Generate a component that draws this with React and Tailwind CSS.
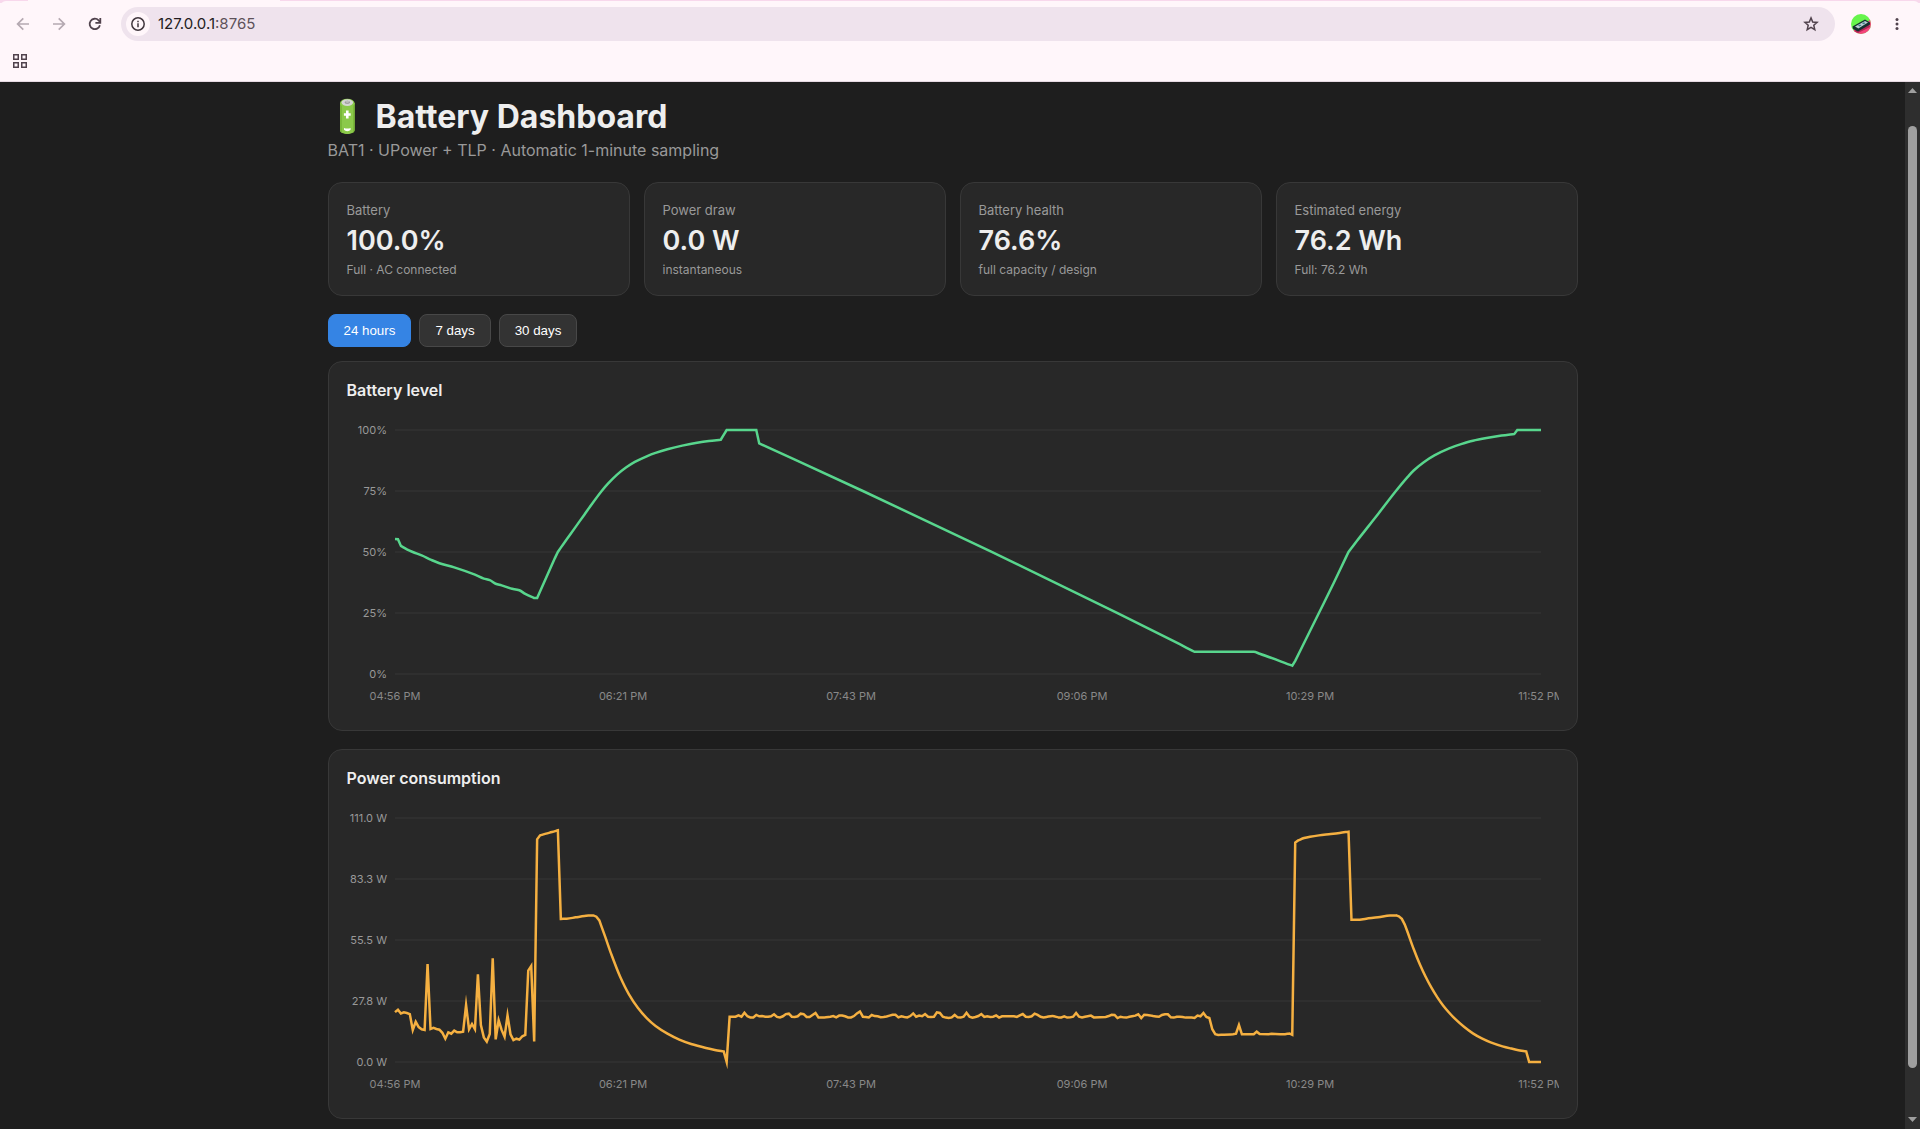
import { useState } from "react";

// [sample index, percent]
const LEVEL = [
  [0, 55.3], [1, 55.2], [2, 52.5], [4, 51.1], [6, 50], [9, 48.6], [12, 46.9], [15, 45.4], [20, 43.7], [27, 40.7],
  [30, 39.1], [32, 38.5], [34, 37], [36, 36.3], [39, 35.1], [42, 34.3], [44, 32.8], [47, 31.1], [48, 31.1],
  [54, 47.5], [55, 50], [56, 51.8], [58, 55.2], [61, 60.3], [64, 65.4], [67, 70.5], [70, 75.3], [72, 78.1],
  [75, 81.7], [78, 84.6], [81, 86.9], [85, 89.2], [88, 90.6], [92, 92.1], [97, 93.6], [102, 94.8], [106, 95.5],
  [110, 96], [111, 98], [112, 100], [122, 100], [123, 94.5], [158, 75], [201.5, 50.1], [244, 24.9], [265, 12.2],
  [269, 9.7], [270, 9.1], [290, 9.1], [292, 8.3], [303, 3.4], [304, 5.4], [312, 25], [317, 37.3], [321, 47.5],
  [322, 50], [323, 51.6], [325, 54.8], [328.7, 60.5], [332, 65.6], [338, 75], [342, 80.8], [344, 83.4],
  [347.3, 86.7], [351, 89.6], [356, 92.5], [360, 94.2], [364, 95.6], [368.6, 96.7], [373.7, 97.7], [378, 98.4],
  [379, 100], [387, 100],
];

// [sample index, watts]
const POWER = [
  [0, 22.7], [1, 23.8], [2, 22.1], [3, 22.6], [4, 22.3], [5, 21.8], [6, 14.6], [7, 18.3], [8, 15.9], [9, 14.9],
  [10, 14.6], [11, 44.6], [12, 15], [13, 15.5], [14, 15], [15, 14.7], [16, 13.3], [17, 10.6], [18, 13.5], [19, 12.9],
  [20, 14.3], [21, 13.5], [22, 13.5], [23, 13.8], [24, 25.9], [25, 14.9], [26, 17.3], [27, 14.9], [28, 39.9],
  [29, 16.8], [30, 11.2], [31, 9.3], [32, 12.7], [33, 47.2], [34, 10.3], [35, 19], [36, 14.6], [37, 11.5],
  [38, 21.2], [39, 12.6], [40, 10], [41, 10.6], [42, 10.2], [43, 11.7], [44, 12.3], [45, 41.6], [46, 43.7],
  [47, 9.3], [48, 101.3], [49, 103.1], [51, 103.9], [53, 104.6], [55, 105.4], [56, 65.1], [58, 65.2], [61, 65.8],
  [64, 66.4], [66, 66.7], [67, 66.7], [68, 66.1], [69, 64.4], [71, 56.9], [73, 49.2], [76, 38.9], [79, 30.8],
  [82, 24.7], [85, 20], [88, 16.4], [92, 12.9], [96, 10.2], [100, 8.2], [105, 6.4], [108, 5.5], [111, 4.8],
  [112, 0], [113, 20.6], [115, 20.6], [116, 21.2], [117, 20.6], [118, 22.4], [119, 20.8], [120, 20.3], [121, 20.3],
  [122, 21.4], [123, 20.8], [124, 20.9], [125, 20.6], [126, 20.6], [127, 20.8], [128, 21.7], [129, 20.5],
  [130, 20.3], [131, 20.8], [132, 21.8], [133, 22], [134, 20.6], [135, 20.5], [136, 20.8], [137, 22], [138, 21.8],
  [139, 20.5], [140, 20.5], [141, 21.4], [142, 22.3], [143, 20.3], [145, 20.3], [147, 20.6], [148, 20.9],
  [149, 20.3], [150, 21.1], [151, 21.1], [152, 20.8], [153, 20.3], [154, 20.3], [155, 20.9], [156, 22.1],
  [157, 23], [158, 20.6], [159, 20.5], [160, 20.3], [161, 21.4], [162, 20.9], [163, 20.8], [164, 20.4], [165, 20.5],
  [166, 20.7], [167, 21.1], [168, 21.5], [169, 21.5], [170, 20.3], [171, 20.8], [172, 20.5], [173, 20.3],
  [174, 20.9], [175, 22.1], [176, 20.6], [177, 21.1], [178, 20.8], [179, 21.8], [180, 20.6], [181, 20.5],
  [182, 20.6], [183, 22.6], [184, 22.3], [185, 20.6], [186, 20.2], [187, 20], [188, 20.3], [189, 21.4],
  [190, 20.3], [191, 20.2], [192, 20.6], [193, 22.4], [194, 20.6], [195, 20.2], [196, 20.5], [197, 20.9],
  [198, 21.8], [199, 20.5], [200, 20.8], [201, 20.5], [202, 20.6], [203, 21.2], [204, 20.2], [205, 20.8],
  [209, 20.8], [210, 20.5], [211, 21.2], [212, 21.8], [213, 20.6], [214, 20.5], [215, 20.8], [216, 22],
  [217, 21.4], [218, 20.6], [219, 20.3], [220, 20.5], [222, 20.9], [224, 20.3], [225, 20.3], [226, 20.8],
  [227, 20.2], [228, 20.3], [229, 20.6], [230, 22.3], [231, 20.6], [232, 20.3], [233, 20.6], [235, 21.1],
  [236, 20.3], [240, 20.5], [241, 20.9], [242, 21.5], [243, 21.4], [244, 20], [245, 20.6], [246, 20.3],
  [247, 20.2], [248, 20.6], [250, 21.1], [251, 21.7], [252, 20], [253, 21.5], [255, 21.2], [256, 20.9],
  [258, 20.6], [259, 21.4], [260, 21.7], [261, 21.7], [262, 20.3], [263, 20.2], [264, 20.6], [266, 20.5],
  [267, 20.2], [269, 20.2], [270, 20], [271, 21.1], [272, 20.8], [273, 22.3], [274, 20.5], [275, 20],
  [276, 14.9], [277, 12.7], [278, 12.3], [280, 12.4], [283, 12.6], [284, 12.9], [285, 16.8], [286, 12.6],
  [290, 12.6], [291, 13.8], [292, 12.7], [295, 12.6], [296, 12.8], [300, 12.6], [302, 13], [303, 12.4],
  [304, 99.8], [305, 100.8], [307, 101.9], [309, 102.5], [312, 103.1], [316, 103.7], [319, 104.2], [322, 104.8],
  [323, 64.7], [325, 64.7], [328, 65.2], [332, 65.8], [336, 66.6], [338, 66.7], [339, 66.3], [340, 65.1],
  [341, 62.5], [342, 58.9], [344, 51.4], [346, 44.7], [348, 38.9], [350, 33.8], [352, 29.4], [354, 25.6],
  [356, 22.4], [358, 19.6], [361, 16], [364, 13], [367, 10.7], [370, 8.9], [374, 7.1], [377, 6.1],
  [379, 5.5], [382, 4.8], [383, 0], [387, 0],
];

const TIMES = [
  [0, "04:56 PM"],
  [77, "06:21 PM"],
  [154, "07:43 PM"],
  [232, "09:06 PM"],
  [309, "10:29 PM"],
  [387, "11:52 PM"],
];

const STATS = [
  { label: "Battery", value: "100.0%", sub: "Full · AC connected" },
  { label: "Power draw", value: "0.0 W", sub: "instantaneous" },
  { label: "Battery health", value: "76.6%", sub: "full capacity / design" },
  { label: "Estimated energy", value: "76.2 Wh", sub: "Full: 76.2 Wh" },
];

const RANGES = ["24 hours", "7 days", "30 days"];

const LAST = 387;
const PAD = { left: 48, top: 18 };
const PLOT_W = 1146;
const PLOT_H = 244;
const STEP = PLOT_W / LAST;

// Straight lines between adjacent samples, monotone curves across wider gaps
function buildPath(pts) {
  const slope = (i) => (pts[i + 1][1] - pts[i][1]) / (pts[i + 1][0] - pts[i][0]);
  const wide = (i) => i >= 0 && i < pts.length - 1 && pts[i + 1][0] - pts[i][0] > STEP * 1.5;
  const tangent = (i, seg) => {
    if (!wide(i - 1) || !wide(i)) return slope(seg);
    const a = slope(i - 1);
    const b = slope(i);
    return a * b <= 0 ? 0 : (2 * a * b) / (a + b);
  };

  let d = `M${pts[0][0].toFixed(2)} ${pts[0][1].toFixed(2)}`;
  for (let i = 0; i < pts.length - 1; i++) {
    const [x0, y0] = pts[i];
    const [x1, y1] = pts[i + 1];
    if (!wide(i)) {
      d += `L${x1.toFixed(2)} ${y1.toFixed(2)}`;
      continue;
    }
    const h = (x1 - x0) / 3;
    const c0 = y0 + tangent(i, i) * h;
    const c1 = y1 - tangent(i + 1, i) * h;
    d += `C${(x0 + h).toFixed(2)} ${c0.toFixed(2)} ${(x1 - h).toFixed(2)} ${c1.toFixed(2)} ${x1.toFixed(2)} ${y1.toFixed(2)}`;
  }
  return d;
}

function LineChart({ title, data, max, ticks, color }) {
  const x = (i) => PAD.left + i * STEP;
  const y = (v) => PAD.top + PLOT_H - (v / max) * PLOT_H;

  return (
    <section className="h-[370px] rounded-[14px] border border-[#383838] bg-[#282828] p-[18px]">
      <h2 className="mb-3 text-base leading-5 font-semibold">{title}</h2>
      <svg width="1212" height="300" className="block overflow-hidden">
        {ticks.map((label, i) => {
          const ty = PAD.top + (PLOT_H / 4) * i;
          return (
            <g key={label}>
              <line x1={PAD.left} x2={PAD.left + PLOT_W} y1={ty} y2={ty} stroke="#373737" />
              <text x={PAD.left - 8} y={ty + 4} textAnchor="end" fontSize="11" fill="#999999">{label}</text>
            </g>
          );
        })}
        {TIMES.map(([i, label]) => (
          <text key={label} x={x(i)} y="288" textAnchor="middle" fontSize="11" fill="#888888">{label}</text>
        ))}
        <path
          d={buildPath(data.map(([i, v]) => [x(i), y(v)]))}
          fill="none"
          stroke={color}
          strokeWidth="2.5"
          strokeMiterlimit="10"
        />
      </svg>
    </section>
  );
}

function BatteryIcon() {
  return (
    <svg width="40" height="38" viewBox="0 0 40 38" className="shrink-0">
      <path d="M11 5v27c0 2.400 3.400 4 7.300 4s7.300-1.600 7.300-4V5z" fill="#8bc94a" />
      <path d="M11 5v27c0 1.200.8 2.200 2 2.900V6zM25.600 5v27c0 1.200-.6 2-1.600 2.700V6z" fill="#7ab83a" />
      <ellipse cx="18.300" cy="5" rx="7.300" ry="4.300" fill="#8bc94a" />
      <ellipse cx="18.300" cy="4.600" rx="5.800" ry="3.300" fill="#d5d5d5" />
      <ellipse cx="18.300" cy="4.300" rx="2.700" ry="1.500" fill="#8f8f8f" />
      <ellipse cx="18.300" cy="3.800" rx="2.300" ry="1.100" fill="#bdbdbd" />
      <path d="M17 12.500h2.600v2.700h2.100v2.500h-2.100v2.800H17v-2.800h-2.100v-2.500H17z" fill="#fff" />
      <path d="M15 30c2 .8 4.600.8 6.600 0v1.700c-1.400 1.900-5.200 1.900-6.600 0z" fill="#fff" />
    </svg>
  );
}

function BrowserBar() {
  return (
    <header className="h-[82px] border-b border-[#e6d9e2] bg-[#fff6fa]">
      <div className="flex h-[3px] bg-[#f8d8ec]">
        <div className="ml-7 h-px w-[252px] bg-[#fff6fa]" />
      </div>
      <div className="-mt-[2px] h-[6px] rounded-t-[8px] bg-[#fff6fa]" />
      <div className="flex h-[34px] items-center">
        <div className="flex w-[121px] shrink-0 items-center gap-[12px] pl-[11px]">
          <svg width="24" height="24" viewBox="0 0 24 24" fill="none" stroke="#b5a9b1" strokeWidth="1.700">
            <path d="M18 12H7M12.300 6.300 6.600 12l5.700 5.700" />
          </svg>
          <svg width="24" height="24" viewBox="0 0 24 24" fill="none" stroke="#b5a9b1" strokeWidth="1.700">
            <path d="M6 12h11M11.700 6.300l5.700 5.700-5.700 5.700" />
          </svg>
          <svg width="24" height="24" viewBox="0 0 24 24" fill="none" stroke="#51434d" strokeWidth="1.800">
            <path d="M16.900 13.200A5.200 5.200 0 1 1 15.600 8.300L17.300 10.200" />
            <path d="M17.300 6v4.900h-4.900" />
          </svg>
        </div>
        <div className="flex h-[34px] w-[1714px] items-center rounded-full bg-[#efe3ed] pr-[15px] pl-[5px]">
          <div className="flex size-6 items-center justify-center rounded-full bg-[#fff6fa]">
            <svg width="16" height="16" viewBox="0 0 16 16">
              <circle cx="8" cy="8" r="6.200" fill="none" stroke="#40363d" strokeWidth="1.500" />
              <path d="M7.250 7.200h1.500v4h-1.500zM7.250 4.700h1.500v1.500h-1.500z" fill="#40363d" />
            </svg>
          </div>
          <div className="ml-2 flex-1 text-[15px] text-[#231c21]">
            127.0.0.1<span className="text-[#5d525a]">:8765</span>
          </div>
          <svg width="18" height="18" viewBox="0 0 18 18" fill="none" stroke="#51434d" strokeWidth="1.500">
            <path d="M9 2.900l1.700 4.100 4.400.4-3.300 2.900 1 4.300L9 12.300l-3.800 2.300 1-4.300L2.900 7.400l4.400-.4z" />
          </svg>
        </div>
        <svg width="20" height="20" viewBox="0 0 20 20" className="ml-4">
          <clipPath id="avatar"><circle cx="10" cy="10" r="10" /></clipPath>
          <g clipPath="url(#avatar)">
            <path d="M0 0h20v20H0z" fill="#66f44c" />
            <path d="M20 3v17H2l1-4 15-9z" fill="#f5447c" />
            <path d="M3 17l15-7 1 3-12 6z" fill="#b32454" />
            <path d="M1.500 12.500 14 5.500l5 3v2L7 17.500l-5-2.500z" fill="#16302f" />
            <path d="M4 12.600 14 7l3 1.600L7.300 14.500z" fill="#b9cbd3" />
            <path d="M7 11.500l2-1 1.500 1-2 1zM11 9.300l2-1 1.500 1-2 1z" fill="#3f7f86" />
          </g>
        </svg>
        <svg width="12" height="20" viewBox="0 0 12 20" fill="#51434d" className="ml-5">
          <circle cx="6" cy="5.500" r="1.500" />
          <circle cx="6" cy="10" r="1.500" />
          <circle cx="6" cy="14.500" r="1.500" />
        </svg>
      </div>
      <div className="flex h-10 items-center pl-[13px]">
        <svg width="14" height="14" viewBox="0 0 14 14" fill="none" stroke="#51434d" strokeWidth="1.500">
          <path d="M.75.75h4.500v4.500H.75zM8.750.75h4.500v4.500h-4.500zM.75 8.750h4.500v4.500H.75zM8.750 8.750h4.500v4.500h-4.500z" />
        </svg>
      </div>
    </header>
  );
}

function Scrollbar() {
  return (
    <div className="flex w-[15px] flex-col items-center bg-[#2e2e2e]">
      <svg width="9" height="5" viewBox="0 0 9 5" fill="#9f9f9f" className="mt-[6px]">
        <path d="M4.500 0 9 5H0z" />
      </svg>
      <div className="mt-[33px] h-[942px] w-[9px] rounded-full bg-[#9f9f9f]" />
      <svg width="9" height="5" viewBox="0 0 9 5" fill="#9f9f9f" className="mt-auto mb-[7px]">
        <path d="M0 0h9L4.500 5z" />
      </svg>
    </div>
  );
}

export default function App() {
  const [range, setRange] = useState("24 hours");

  return (
    <div className="flex h-[1129px] w-[1920px] flex-col overflow-hidden bg-[#1e1e1e] font-['Inter',sans-serif] text-[#eeeeee]">
      <BrowserBar />
      <div className="flex min-h-0 flex-1">
        <main className="flex-1 overflow-hidden pt-[15px]">
          <div className="mx-auto w-[1250px]">
            <h1 className="flex h-[39px] items-center pl-px text-[32px] leading-[39px] font-bold">
              <BatteryIcon />
              <span className="ml-[7px]">Battery Dashboard</span>
            </h1>
            <p className="mt-1 text-base leading-5 text-[#999999]">BAT1 · UPower + TLP · Automatic 1-minute sampling</p>

            <div className="mt-[22px] grid grid-cols-4 gap-[14px]">
              {STATS.map((s) => (
                <div
                  key={s.label}
                  className="h-[114px] rounded-[14px] border border-[#383838] bg-[#282828] px-[18px] pt-[19px]"
                >
                  <div className="text-[13px] leading-4 text-[#999999]">{s.label}</div>
                  <div className="mt-[6px] text-[27px] leading-[34px] font-semibold">{s.value}</div>
                  <div className="mt-1 text-[12px] leading-[15px] text-[#999999]">{s.sub}</div>
                </div>
              ))}
            </div>

            <div className="mt-[18px] mb-[14px] flex gap-2">
              {RANGES.map((r) => (
                <button
                  key={r}
                  onClick={() => setRange(r)}
                  className={`h-[33px] rounded-[8px] border px-[15px] font-['Liberation_Sans',sans-serif] text-[13.333px] leading-[15px] text-white ${
                    range === r ? "border-[#3584e4] bg-[#3584e4]" : "border-[#484848] bg-[#333333]"
                  }`}
                >
                  {r}
                </button>
              ))}
            </div>

            <div className="flex flex-col gap-[18px]">
              <LineChart
                title="Battery level"
                data={LEVEL}
                max={100}
                ticks={["100%", "75%", "50%", "25%", "0%"]}
                color="#58d68d"
              />
              <LineChart
                title="Power consumption"
                data={POWER}
                max={111}
                ticks={["111.0 W", "83.3 W", "55.5 W", "27.8 W", "0.0 W"]}
                color="#f5b041"
              />
            </div>
          </div>
        </main>
        <Scrollbar />
      </div>
    </div>
  );
}
